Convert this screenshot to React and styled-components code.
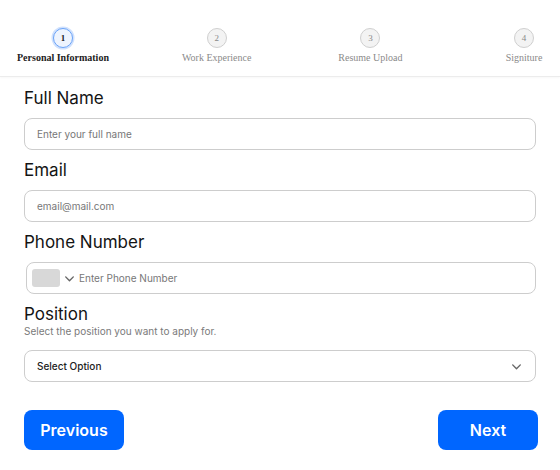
import React from "react";
import styled, { createGlobalStyle } from "styled-components";

const Global = createGlobalStyle`
  html, body { margin: 0; padding: 0; background: #fff; }
  body { font-family: Inter, "Liberation Sans", sans-serif; }
  * { box-sizing: border-box; }
`;

const Page = styled.div`
  width: 560px;
  height: 470px;
  overflow: hidden;
  background: #fff;
`;

const Stepper = styled.div`
  height: 77px;
  border-bottom: 1px solid #ececec;
  box-shadow: 0 1px 2px rgba(0,0,0,0.03);
  display: grid;
  grid-template-columns: repeat(4, 94px);
  column-gap: 59.7px;
  padding: 28px 0 0 16px;
  overflow: hidden;
`;

const Step = styled.div`
  display: flex;
  flex-direction: column;
  align-items: center;
  font-family: "Liberation Serif", "Times New Roman", serif;
`;

const Circle = styled.div`
  width: 20px;
  height: 20px;
  border-radius: 50%;
  display: flex;
  align-items: center;
  justify-content: center;
  font-size: 9px;
  font-weight: ${p => (p.$active ? 700 : 400)};
  color: ${p => (p.$active ? "#222" : "#888")};
  background: ${p => (p.$active ? "#eef4fe" : "#f3f3f3")};
  border: 1.5px solid ${p => (p.$active ? "#6aa3f8" : "#cfcfcf")};
  box-shadow: ${p => (p.$active ? "0 0 0 1.5px rgba(120,170,250,0.35)" : "none")};
`;

const StepLabel = styled.div`
  margin-top: 4px;
  font-size: 10px;
  white-space: nowrap;
  font-weight: ${p => (p.$active ? 700 : 400)};
  color: ${p => (p.$active ? "#222" : "#8a8a8a")};
`;

const Form = styled.div`
  padding: 10px 24px 0 24px;
  display: flex;
  flex-direction: column;
`;

const Field = styled.div`
  display: flex;
  flex-direction: column;
  margin-bottom: 9px;
`;

const Label = styled.div`
  font-size: 17px;
  line-height: 22px;
  color: #141414;
  margin-bottom: ${p => (p.$tight ? "0" : "9px")};
`;

const Hint = styled.div`
  font-size: 10px;
  line-height: 12px;
  color: #7a7a7a;
  margin-bottom: 13px;
`;

const InputBox = styled.div`
  height: 32px;
  width: ${p => p.$width || "512px"};
  margin-left: ${p => p.$offset || "0"};
  border: 1px solid #cdcdcd;
  border-radius: 8px;
  display: flex;
  align-items: center;
  padding: 0 ${p => p.$pad || "12px"};
  gap: ${p => p.$gap || "4px"};
`;

const Placeholder = styled.span`
  font-size: 10px;
  color: ${p => (p.$dark ? "#222" : "#777")};
  font-weight: ${p => (p.$dark ? 500 : 400)};
  flex: 1;
`;

const Flag = styled.div`
  width: 28px;
  height: 18px;
  border-radius: 3px;
  background: #d8d8d8;
`;

const Buttons = styled.div`
  display: flex;
  justify-content: space-between;
  margin-top: 19px;
  width: 514px;
`;

const Button = styled.button`
  width: 100px;
  height: 40px;
  border: none;
  border-radius: 8px;
  background: #0066ff;
  color: #fff;
  font-family: Inter, "Liberation Sans", sans-serif;
  font-size: 16px;
  font-weight: 600;
`;

const Chevron = ({ color = "#555", size = 12 }) => (
  <svg width={size} height={size} viewBox="0 0 12 12" fill="none">
    <path d="M2.5 4.5L6 8L9.5 4.5" stroke={color} strokeWidth="1.3" strokeLinecap="round" strokeLinejoin="round" />
  </svg>
);

const steps = ["Personal Information", "Work Experience", "Resume Upload", "Signiture"];

export default function App() {
  return (
    <Page>
      <Global />
      <Stepper>
        {steps.map((s, i) => (
          <Step key={s}>
            <Circle $active={i === 0}>{i + 1}</Circle>
            <StepLabel $active={i === 0}>{s}</StepLabel>
          </Step>
        ))}
      </Stepper>
      <Form>
        <Field>
          <Label>Full Name</Label>
          <InputBox><Placeholder>Enter your full name</Placeholder></InputBox>
        </Field>
        <Field>
          <Label>Email</Label>
          <InputBox><Placeholder>email@mail.com</Placeholder></InputBox>
        </Field>
        <Field>
          <Label>Phone Number</Label>
          <InputBox $width="510px" $offset="2px" $pad="5px" $gap="3px">
            <Flag />
            <Chevron color="#666" size={13} />
            <Placeholder>Enter Phone Number</Placeholder>
          </InputBox>
        </Field>
        <Field>
          <Label $tight>Position</Label>
          <Hint>Select the position you want to apply for.</Hint>
          <InputBox>
            <Placeholder $dark>Select Option</Placeholder>
            <Chevron color="#666" size={13} />
          </InputBox>
        </Field>
        <Buttons>
          <Button>Previous</Button>
          <Button>Next</Button>
        </Buttons>
      </Form>
    </Page>
  );
}
